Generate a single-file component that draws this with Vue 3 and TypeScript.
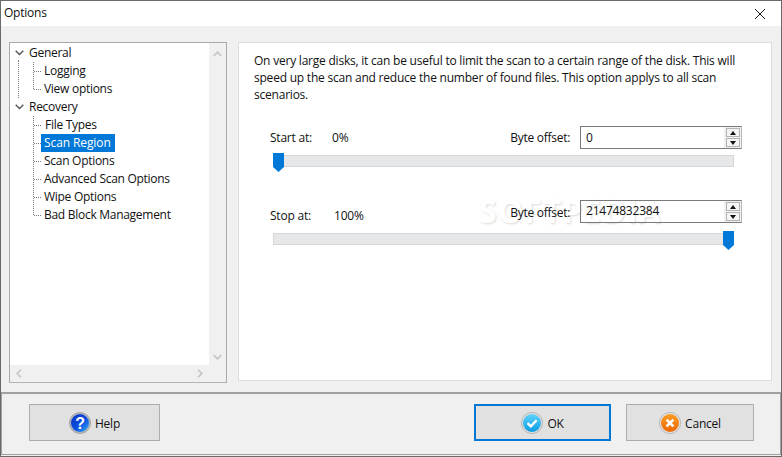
<script setup lang="ts">
interface TreeChild { label: string; selected?: boolean; nudge?: boolean }
interface TreeGroup { label: string; children: TreeChild[] }

const tree: TreeGroup[] = [
  { label: 'General', children: [{ label: 'Logging' }, { label: 'View options' }] },
  {
    label: 'Recovery',
    children: [
      { label: 'File Types', nudge: true },
      { label: 'Scan Region', selected: true },
      { label: 'Scan Options' },
      { label: 'Advanced Scan Options' },
      { label: 'Wipe Options' },
      { label: 'Bad Block Management' },
    ],
  },
]
</script>

<template>
  <div class="window">
    <header class="titlebar">
      <span class="title">Options</span>
      <svg class="close" width="12" height="12" viewBox="0 0 12 12" aria-label="Close">
        <path d="M1 1 L11 11 M11 1 L1 11" stroke="#1a1a1a" stroke-width="1" fill="none" />
      </svg>
    </header>

    <main class="content">
      <aside class="tree-panel">
        <div class="tree-top">
          <div class="tree">
            <div v-for="(group, gi) in tree" :key="group.label" class="group" :class="{ 'group-first': gi === 0 }">
              <div class="row row-parent">
                <svg class="chevron" width="9" height="6" viewBox="0 0 9 6">
                  <path d="M0.7 0.8 L4.5 4.6 L8.3 0.8" stroke="#555" stroke-width="1.4" fill="none" />
                </svg>
                <span class="label">{{ group.label }}</span>
              </div>
              <div class="children">
                <div v-for="child in group.children" :key="child.label" class="row row-child">
                  <span class="dash"></span>
                  <span class="label" :class="{ selected: child.selected, nudge: child.nudge }">{{ child.label }}</span>
                </div>
              </div>
            </div>
          </div>
          <div class="vscroll">
            <svg width="9" height="6" viewBox="0 0 9 6"><path d="M0.7 5 L4.5 1.2 L8.3 5" stroke="#c4c4c4" stroke-width="1.6" fill="none" /></svg>
            <svg width="9" height="6" viewBox="0 0 9 6"><path d="M0.7 1 L4.5 4.8 L8.3 1" stroke="#c4c4c4" stroke-width="1.6" fill="none" /></svg>
          </div>
        </div>
        <div class="hscroll">
          <svg width="6" height="9" viewBox="0 0 6 9"><path d="M5 0.7 L1.2 4.5 L5 8.3" stroke="#c4c4c4" stroke-width="1.6" fill="none" /></svg>
          <svg width="6" height="9" viewBox="0 0 6 9"><path d="M1 0.7 L4.8 4.5 L1 8.3" stroke="#c4c4c4" stroke-width="1.6" fill="none" /></svg>
        </div>
      </aside>

      <section class="settings">
        <span class="watermark">SOFTPEDIA</span>

        <p class="intro">
          On very large disks, it can be useful to limit the scan to a certain range of the disk. This will<br />
          speed up the scan and reduce the number of found files. This option applys to all scan<br />
          scenarios.
        </p>

        <div class="region region-start">
          <div class="field-row">
            <span class="field-name">Start at:</span>
            <span class="field-value">0%</span>
            <span class="offset-name">Byte offset:</span>
            <div class="spin">
              <span class="spin-value">0</span>
              <div class="spin-buttons">
                <span class="spin-btn"><i class="arrow-up"></i></span>
                <span class="spin-btn"><i class="arrow-down"></i></span>
              </div>
            </div>
          </div>
          <div class="slider">
            <div class="track"></div>
            <svg class="thumb thumb-left" width="11" height="19" viewBox="0 0 11 19"><path d="M0 0 H11 V14 L5.5 19 L0 14 Z" fill="#0078d7" /></svg>
          </div>
        </div>

        <div class="region region-stop">
          <div class="field-row">
            <span class="field-name field-name-stop">Stop at:</span>
            <span class="field-value">100%</span>
            <span class="offset-name">Byte offset:</span>
            <div class="spin">
              <span class="spin-value">21474832384</span>
              <div class="spin-buttons">
                <span class="spin-btn"><i class="arrow-up"></i></span>
                <span class="spin-btn"><i class="arrow-down"></i></span>
              </div>
            </div>
          </div>
          <div class="slider">
            <div class="track"></div>
            <svg class="thumb thumb-right" width="11" height="19" viewBox="0 0 11 19"><path d="M0 0 H11 V14 L5.5 19 L0 14 Z" fill="#0078d7" /></svg>
          </div>
        </div>
      </section>
    </main>

    <footer class="footer">
      <button class="btn btn-help" type="button">
        <svg width="22" height="22" viewBox="0 0 22 22">
          <defs>
            <linearGradient id="helpFill" x1="0" y1="0" x2="1" y2="1">
              <stop offset="0" stop-color="#0a2fc0" />
              <stop offset="0.55" stop-color="#0b4fe0" />
              <stop offset="1" stop-color="#35b4f5" />
            </linearGradient>
          </defs>
          <circle cx="11" cy="11" r="10.6" fill="#b4b8bd" stroke="#8e8e8e" stroke-width="0.6" />
          <circle cx="11" cy="11" r="9" fill="url(#helpFill)" />
          <text x="11" y="16.5" text-anchor="middle" class="help-mark">?</text>
        </svg>
        <span>Help</span>
      </button>
      <div class="footer-right">
        <button class="btn btn-ok" type="button">
          <svg width="22" height="22" viewBox="0 0 22 22">
            <defs>
              <linearGradient id="okFill" x1="0" y1="0" x2="0" y2="1">
                <stop offset="0" stop-color="#62d4fb" />
                <stop offset="1" stop-color="#0a9be4" />
              </linearGradient>
            </defs>
            <circle cx="11" cy="11" r="10.6" fill="#dcdcdc" stroke="#a0a0a0" stroke-width="0.6" />
            <circle cx="11" cy="11" r="9" fill="url(#okFill)" />
            <path d="M6.5 11.2 L9.8 14.4 L15.6 8.2" stroke="#fff" stroke-width="2.4" fill="none" />
          </svg>
          <span>OK</span>
        </button>
        <button class="btn btn-cancel" type="button">
          <svg width="22" height="22" viewBox="0 0 22 22">
            <defs>
              <linearGradient id="cancelFill" x1="0" y1="0" x2="0" y2="1">
                <stop offset="0" stop-color="#fb9c22" />
                <stop offset="1" stop-color="#ee6a06" />
              </linearGradient>
            </defs>
            <circle cx="11" cy="11" r="10.6" fill="#e2e2e2" stroke="#a0a0a0" stroke-width="0.6" />
            <circle cx="11" cy="11" r="9" fill="url(#cancelFill)" />
            <path d="M7.6 7.6 L14.4 14.4 M14.4 7.6 L7.6 14.4" stroke="#fff" stroke-width="2.6" fill="none" />
          </svg>
          <span>Cancel</span>
        </button>
      </div>
    </footer>
  </div>
</template>

<style>
html, body { margin: 0; padding: 0; background: #f0f0f0; }
</style>

<style scoped>
.window {
  width: 782px;
  height: 457px;
  box-sizing: border-box;
  border: 1px solid #6a6a6a;
  background: #f0f0f0;
  display: flex;
  flex-direction: column;
  font-family: "Open Sans", "Noto Sans", sans-serif;
  font-size: 12px;
  letter-spacing: -0.22px;
  color: #111;
  overflow: hidden;
}
.titlebar {
  height: 25px;
  flex: none;
  background: #fff;
  display: flex;
  align-items: center;
  justify-content: space-between;
  padding: 0 15px 0 3px;
}
.title { position: relative; top: -1px; }
.close { display: block; }

.content {
  flex: 1;
  min-height: 0;
  display: flex;
  align-items: flex-start;
  padding: 16px 9px 0 8px;
  gap: 11px;
}

.tree-panel {
  width: 218px;
  height: 341px;
  flex: none;
  box-sizing: border-box;
  border: 1px solid #a9a9a9;
  border-bottom-color: #b4b4b4;
  display: flex;
  flex-direction: column;
  background: #f0f0f0;
  letter-spacing: -0.28px;
}
.tree-top { flex: 1; min-height: 0; display: flex; }
.tree {
  flex: 1;
  background: #fff;
  padding-top: 1px;
}
.vscroll {
  width: 17px;
  flex: none;
  display: flex;
  flex-direction: column;
  justify-content: space-between;
  align-items: center;
  padding: 8px 0 5px;
  box-sizing: border-box;
}
.vscroll svg, .hscroll svg { display: block; }
.hscroll {
  height: 17px;
  flex: none;
  display: flex;
  align-items: center;
  justify-content: space-between;
  padding: 0 23px 0 6px;
}

.group { position: relative; }
.group-first::before {
  content: "";
  position: absolute;
  left: 8px;
  top: 16px;
  bottom: 0;
  border-left: 1px dotted #7a7a7a;
}
.row { height: 18px; display: flex; align-items: center; white-space: nowrap; }
.row-parent { padding-left: 5px; }
.row-parent .label { margin: 0 0 2px 5px; }
.chevron { display: block; flex: none; }
.children { position: relative; }
.children::before {
  content: "";
  position: absolute;
  left: 23px;
  top: 0;
  bottom: 9px;
  border-left: 1px dotted #7a7a7a;
}
.row-child { padding-left: 24px; }
.dash {
  width: 7px;
  flex: none;
  border-top: 1px dotted #7a7a7a;
}
.row-child .label {
  height: 18px;
  line-height: 17px;
  padding: 0 2px;
  margin-left: 1px;
}
.row-child .label.nudge { margin-left: 2px; }
.row-child .label.selected {
  background: #0078d7;
  color: #fff;
  margin-left: 0;
  padding: 0 4px 0 3px;
  letter-spacing: -0.1px;
}

.settings {
  position: relative;
  flex: 1;
  height: 339px;
  box-sizing: border-box;
  background: #fff;
  border: 1px solid #dcdcdc;
  padding: 9px 15px 0;
  overflow: hidden;
}
.intro {
  position: relative;
  margin: 0;
  line-height: 17px;
  white-space: nowrap;
}
.region { position: relative; margin-left: 16px; width: 472px; }
.region-start { margin-top: 23px; }
.region-stop { margin-top: 28px; }
.region-stop .slider { margin-top: 8px; }
.region-stop .field-name,
.region-stop .field-value { margin-top: 7px; }
.region-stop .offset-name { margin-top: 2px; }
.region-stop .spin-value { margin-bottom: 2px; }
.field-row { display: flex; align-items: center; height: 23px; }
.field-name { width: 62px; flex: none; }
.field-name-stop { width: 64px; }
.offset-name { margin-left: auto; margin-right: 10px; letter-spacing: -0.28px; }

.spin {
  width: 162px;
  height: 23px;
  flex: none;
  box-sizing: border-box;
  border: 1px solid #7a7a7a;
  border-right-color: #b8b8b8;
  display: flex;
  align-items: center;
  justify-content: space-between;
}
.spin-value { padding-left: 5px; }
.spin-buttons {
  width: 17px;
  height: 100%;
  display: flex;
  flex-direction: column;
  justify-content: center;
  gap: 1px;
  background: #f0f0f0;
  align-items: center;
}
.spin-btn {
  width: 14px;
  height: 9px;
  box-sizing: border-box;
  border: 1px solid #b4b4b4;
  background: #f4f4f4;
  display: flex;
  align-items: center;
  justify-content: center;
}
.arrow-up, .arrow-down {
  display: block;
  width: 0;
  height: 0;
  border-left: 3.5px solid transparent;
  border-right: 3.5px solid transparent;
}
.arrow-up { border-bottom: 4px solid #111; }
.arrow-down { border-top: 4px solid #111; }

.slider { position: relative; height: 19px; margin: 4px 0 0 3px; width: 461px; }
.track {
  position: absolute;
  left: 0;
  right: 0;
  top: 2px;
  height: 12px;
  box-sizing: border-box;
  background: #e6e7e8;
  border: 1px solid #d6d6d6;
}
.thumb { position: absolute; top: 0; display: block; }
.thumb-left { left: 0; }
.thumb-right { right: 0; }

.watermark {
  position: absolute;
  left: 240px;
  top: 150px;
  font-size: 32px;
  font-weight: 700;
  letter-spacing: 1px;
  line-height: 36px;
  color: #fff;
  text-shadow: 1px 1px 2px rgba(195, 195, 195, 0.6);
  pointer-events: none;
}

.footer {
  flex: none;
  height: 63px;
  margin: 0 0 1px 0;
  box-sizing: border-box;
  border: 1px solid #a0a0a0;
  border-top-width: 2px;
  background: #f0f0f0;
  display: flex;
  align-items: center;
  justify-content: space-between;
  padding: 0 26px 3px 27px;
}
.footer-right { display: flex; gap: 15px; }
.btn {
  height: 37px;
  box-sizing: border-box;
  border: 1px solid #adadad;
  background: #e1e1e1;
  font: inherit;
  letter-spacing: inherit;
  color: #111;
  padding: 0;
  display: flex;
  align-items: center;
  justify-content: center;
  gap: 4px;
}
.btn span { margin-top: 2px; }
.btn svg { display: block; flex: none; }
.btn-help { width: 131px; }
.btn-ok { width: 137px; border: 2px solid #0078d7; }
.btn-cancel { width: 128px; }
.help-mark {
  font-family: "Liberation Sans", sans-serif;
  font-size: 16px;
  font-weight: 700;
  fill: #fff;
}
</style>
